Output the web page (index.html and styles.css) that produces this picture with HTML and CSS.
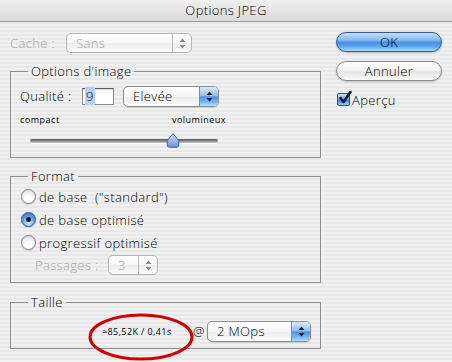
FILE: index.html
```html
<!DOCTYPE html>
<html lang="fr">
<head>
<meta charset="utf-8">
<title>Options JPEG</title>
<link rel="stylesheet" href="styles.css">
</head>
<body>
<div class="titlebar">Options JPEG</div>
<div class="main">
  <div class="left">
    <div class="cache-row">
      <span class="cache-label dis">Cache :</span>
      <div class="popup disabled w-cache">
        <span class="ptxt">Sans</span>
        <span class="arr"><svg width="7" height="11" viewBox="0 0 7 11"><path d="M3.5 0.5 L6.5 4 L0.5 4 Z M0.5 7 L6.5 7 L3.5 10.5 Z" fill="#8a8a8a"/></svg></span>
      </div>
    </div>

    <fieldset class="group g1">
      <legend>Options d'image</legend>
      <div class="q-row">
        <span class="q-label">Qualité :</span>
        <span class="field"><span class="sel">9</span></span>
        <div class="popup active w-qual">
          <span class="ptxt">Elevée</span>
          <span class="arr"><svg width="7" height="11" viewBox="0 0 7 11"><path d="M3.5 0.5 L6.5 4 L0.5 4 Z M0.5 7 L6.5 7 L3.5 10.5 Z" fill="#1a1a1a"/></svg></span>
        </div>
      </div>
      <div class="scale"><span>compact</span><span>volumineux</span></div>
      <div class="slider">
        <div class="track"></div>
        <div class="thumb" style="left:76%"><svg width="14" height="15" viewBox="0 0 14 15"><defs><linearGradient id="tg" x1="0" y1="0" x2="0" y2="1"><stop offset="0" stop-color="#dfe9fb"/><stop offset="0.5" stop-color="#9ab8ec"/><stop offset="1" stop-color="#6f93d6"/></linearGradient></defs><path d="M7 0.7 L12.8 7.5 L12.8 12 Q12.8 14.3 10.5 14.3 L3.5 14.3 Q1.2 14.3 1.2 12 L1.2 7.5 Z" fill="url(#tg)" stroke="#44609a" stroke-width="1"/></svg></div>
      </div>
    </fieldset>

    <fieldset class="group g2">
      <legend>Format</legend>
      <div class="radio-row"><span class="radio"></span><span>de base&nbsp; ("standard")</span></div>
      <div class="radio-row"><span class="radio on"><span class="dot"></span></span><span>de base optimisé</span></div>
      <div class="radio-row"><span class="radio"></span><span>progressif optimisé</span></div>
      <div class="pass-row">
        <span class="pass-label dis">Passages :</span>
        <div class="popup disabled w-pass">
          <span class="ptxt">3</span>
          <span class="arr"><svg width="7" height="11" viewBox="0 0 7 11"><path d="M3.5 0.5 L6.5 4 L0.5 4 Z M0.5 7 L6.5 7 L3.5 10.5 Z" fill="#8a8a8a"/></svg></span>
        </div>
      </div>
    </fieldset>

    <fieldset class="group g3">
      <legend>Taille</legend>
      <div class="size-row">
        <span class="size-val">≈85,52K / 0,41s</span>
        <span class="at">@</span>
        <div class="popup active w-speed">
          <span class="ptxt">2 MOps</span>
          <span class="arr"><svg width="7" height="11" viewBox="0 0 7 11"><path d="M3.5 0.5 L6.5 4 L0.5 4 Z M0.5 7 L6.5 7 L3.5 10.5 Z" fill="#1a1a1a"/></svg></span>
        </div>
      </div>
    </fieldset>
  </div>

  <div class="right">
    <div class="btn ok">OK</div>
    <div class="btn cancel">Annuler</div>
    <div class="check-row">
      <span class="checkbox"><svg width="14" height="14" viewBox="0 0 14 14"><path d="M2.5 7 L5.5 11 L12.5 1" fill="none" stroke="#101a3a" stroke-width="2.6" stroke-linecap="round" stroke-linejoin="round"/></svg></span>
      <span>Aperçu</span>
    </div>
  </div>
</div>
<svg class="annot" width="110" height="52" viewBox="0 0 110 52"><ellipse cx="53" cy="24" rx="51" ry="22" fill="none" stroke="#d00000" stroke-width="3"/></svg>
</body>
</html>
```

FILE: styles.css
```css
html, body {
  margin: 0;
  padding: 0;
}
body {
  width: 452px;
  height: 362px;
  overflow: hidden;
  position: relative;
  font-family: "Open Sans", "DejaVu Sans", sans-serif;
  font-weight: 300;
  font-size: 13px;
  letter-spacing: 0.35px;
  color: #000;
  background: repeating-linear-gradient(#f1f1f1 0 2px, #e8e8e8 2px 4px);
}
.titlebar {
  height: 21px;
  line-height: 21px;
  border-bottom: 1px solid #9c9c9c;
  background: linear-gradient(#f0f0f0, #dadada);
  text-align: center;
  font-size: 13px;
}
.main {
  display: flex;
}
.left {
  width: 311px;
  margin-left: 10px;
}
.right {
  width: 106px;
  margin-left: 15px;
  display: flex;
  flex-direction: column;
}
.dis { color: #a3a3a3; }

/* cache row */
.cache-row {
  display: flex;
  align-items: center;
  height: 20px;
  margin-top: 11px;
}
.cache-label { width: 56px; }

/* popups */
.popup {
  display: flex;
  align-items: stretch;
  box-sizing: border-box;
  height: 20px;
  border: 1px solid #8c8c8c;
  border-radius: 5px;
  background: linear-gradient(#ffffff, #f6f6f6 50%, #ececec 52%, #fbfbfb);
  box-shadow: 0 1px 1px rgba(0,0,0,0.12);
  overflow: hidden;
}
.popup .ptxt {
  flex: 1;
  display: flex;
  align-items: center;
  padding-left: 9px;
}
.popup .arr {
  width: 18px;
  display: flex;
  align-items: center;
  justify-content: center;
  border-left: 1px solid #b8b8b8;
}
.popup.disabled { border-color: #b4b4b4; box-shadow: none; }
.popup.disabled .ptxt { color: #a3a3a3; }
.popup.active .arr {
  border-left-color: #6c8fc4;
  background: linear-gradient(#d9ebfd, #8fc0f3 45%, #4c92e6 52%, #77b7f7 80%, #b9e0ff);
}
.w-cache { width: 126px; }
.w-qual { width: 96px; height: 21px; margin-left: 9px; }
.w-pass { width: 50px; }
.w-speed { width: 104px; height: 21px; }

/* groups */
.group {
  margin: 10px 0 0;
  padding: 6px 9px 7px 9px;
  border: 1px solid #8e8e8e;
  min-width: 0;
}
.group legend {
  margin-left: 8px;
  padding: 0 3px;
  line-height: 16px;
  font-size: 13px;
}
.g2 { padding-top: 1px; padding-bottom: 6px; }
.g3 { margin-top: 11px; padding-top: 10px; padding-bottom: 6px; }

.q-row {
  display: flex;
  align-items: center;
  height: 22px;
}
.q-label { width: 62px; }
.field {
  box-sizing: border-box;
  width: 32px;
  height: 17px;
  background: #fff;
  border: 1px solid #8a8a8a;
  border-top-color: #5e5e5e;
  box-shadow: inset 0 1px 1px rgba(0,0,0,0.15);
  padding: 0 0 0 2px;
  line-height: 15px;
}
.sel { background: #b3d1fb; padding: 0 1px; }

.scale {
  display: flex;
  justify-content: space-between;
  width: 206px;
  margin-top: 7px;
  font-size: 9px;
  font-weight: 400;
  line-height: 12px;
  letter-spacing: 0.5px;
}
.slider {
  position: relative;
  width: 188px;
  height: 18px;
  margin: 6px 0 0 10px;
}
.track {
  position: absolute;
  left: 0;
  right: 0;
  top: 7px;
  height: 4px;
  border-radius: 2px;
  background: linear-gradient(#555, #8a8a8a 50%, #c8c8c8);
  box-shadow: 0 1px 0 rgba(255,255,255,0.8);
}
.thumb {
  position: absolute;
  top: 1px;
  width: 14px;
  height: 15px;
  margin-left: -7px;
}
.thumb svg { display: block; }

/* radios */
.radio-row {
  display: flex;
  align-items: center;
  height: 23px;
}
.radio {
  box-sizing: border-box;
  width: 15px;
  height: 15px;
  margin-left: 1px;
  margin-right: 3px;
  border-radius: 50%;
  border: 1px solid #808080;
  background: radial-gradient(circle at 50% 75%, #ffffff 30%, #e2e2e2 80%);
  box-shadow: 0 1px 1px rgba(0,0,0,0.15);
  display: flex;
  align-items: center;
  justify-content: center;
}
.radio.on {
  border-color: #2d5493;
  background: radial-gradient(circle at 50% 80%, #b7e0ff 10%, #5c9ce8 55%, #2e6fcc 100%);
}
.radio .dot {
  width: 5px;
  height: 5px;
  border-radius: 50%;
  background: #111;
}
.pass-row {
  display: flex;
  align-items: center;
  height: 22px;
}
.pass-label { width: 73px; margin-left: 15px; }

/* size */
.size-row {
  display: flex;
  align-items: center;
  height: 22px;
}
.size-val {
  margin-left: 82px;
  width: 91px;
  font-size: 9px;
  font-weight: 400;
  letter-spacing: 0.4px;
}
.at { width: 14px; }

/* buttons */
.btn {
  box-sizing: border-box;
  height: 20px;
  border-radius: 10px;
  display: flex;
  align-items: center;
  justify-content: center;
  font-size: 13px;
}
.ok {
  margin-top: 10px;
  border: 1px solid #305c9e;
  background: linear-gradient(#c3defa, #86b9ef 40%, #4a8fe2 52%, #5ba6f0 75%, #a8dcff);
  box-shadow: 0 1px 2px rgba(0,0,0,0.25);
}
.cancel {
  margin-top: 9px;
  border: 1px solid #8a8a8a;
  background: linear-gradient(#ffffff, #f3f3f3 45%, #e4e4e4 55%, #fafafa);
  box-shadow: 0 1px 2px rgba(0,0,0,0.2);
}
.check-row {
  display: flex;
  align-items: center;
  margin-top: 11px;
  height: 15px;
  margin-left: 1px;
}
.checkbox {
  position: relative;
  box-sizing: border-box;
  width: 13px;
  height: 13px;
  margin-right: 2px;
  border: 1px solid #2d4f8a;
  border-radius: 2px;
  background: linear-gradient(#c9e2fb, #6ea7ea 50%, #3f86df 55%, #9bd0ff);
}
.checkbox svg {
  position: absolute;
  left: 0;
  top: -3px;
}

.annot {
  position: absolute;
  left: 88px;
  top: 313px;
}
```
